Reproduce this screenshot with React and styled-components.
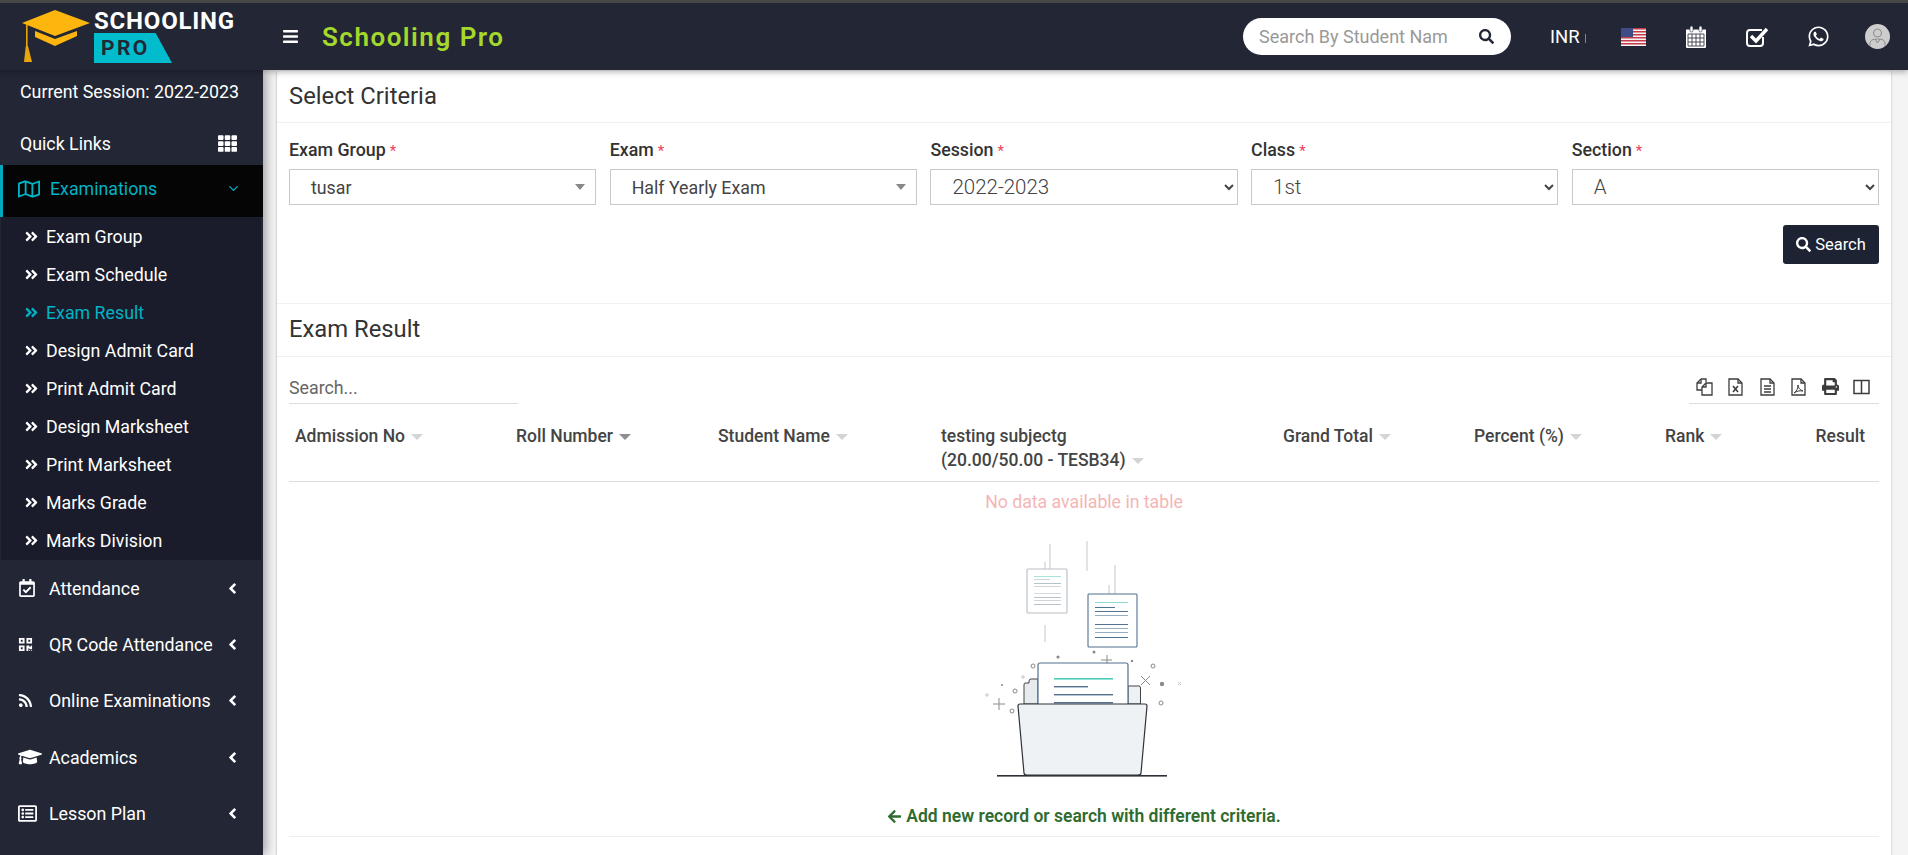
import React from "react";
import styled, { createGlobalStyle } from "styled-components";
import {
  FaBars,
  FaSearch,
  FaTh,
  FaRegMap,
  FaAngleLeft,
  FaAngleDoubleRight,
  FaRegCalendarCheck,
  FaQrcode,
  FaRss,
  FaGraduationCap,
  FaRegListAlt,
  FaWhatsapp,
  FaPrint,
  FaArrowLeft,
} from "react-icons/fa";
import { ChevronDown } from "lucide-react";

const GlobalStyle = createGlobalStyle`
  html, body {
    margin: 0;
    padding: 0;
    height: 100%;
    overflow: hidden;
    background: #f4f4f4;
    font-family: Roboto, "Liberation Sans", sans-serif;
  }
  * { box-sizing: border-box; }
`;

const Page = styled.div`
  height: 855px;
  display: flex;
  flex-direction: column;
  border-top: 3px solid #4a4a4a;
`;

const Header = styled.header`
  height: 67px;
  flex: none;
  display: flex;
  align-items: center;
  background: #232735;
  padding-right: 18px;
  position: relative;
  z-index: 3;
  box-shadow: 0 2px 6px rgba(0, 0, 0, 0.3);
`;

const Logo = styled.div`
  width: 263px;
  flex: none;
  display: flex;
  padding-left: 21px;
  gap: 4px;
`;

const LogoText = styled.div`
  display: flex;
  flex-direction: column;
  gap: 1px;
  padding-top: 1px;
`;

const LogoTop = styled.div`
  font-size: 24px;
  line-height: 21px;
  font-weight: 700;
  color: #fff;
  letter-spacing: 0.8px;
`;

const LogoBadge = styled.div`
  width: 78px;
  height: 30px;
  background: #00bccd;
  clip-path: polygon(0 0, 79% 0, 100% 100%, 0 100%);
  color: #232735;
  font-size: 21px;
  line-height: 30px;
  font-weight: 700;
  letter-spacing: 2.4px;
  padding-left: 7px;
`;

const MenuToggle = styled.span`
  color: #fff;
  font-size: 17px;
  display: flex;
  margin: 0 23px 0 19px;
`;

const Brand = styled.div`
  color: #a5d82d;
  font-size: 26px;
  font-weight: 600;
  letter-spacing: 1.5px;
  flex: 1;
`;

const SearchPill = styled.div`
  width: 268px;
  height: 37px;
  border-radius: 19px;
  background: #fff;
  display: flex;
  align-items: center;
  justify-content: space-between;
  padding: 0 17px 0 16px;
  color: #999;
  font-size: 18px;
  white-space: nowrap;
  svg { color: #232735; font-size: 15px; flex: none; }
`;

const Currency = styled.div`
  color: #fff;
  font-size: 18.500px;
  margin-left: 39px;
  width: 71px;
  &::after {
    content: "";
    display: inline-block;
    width: 1px;
    height: 9px;
    margin-left: 5px;
    background: #5b8fc4;
  }
`;

const TopIcons = styled.div`
  display: grid;
  grid-template-columns: 64px 61px 61px 58px 25px;
  align-items: center;
  color: #fff;
  svg { display: block; }
`;

const Body = styled.div`
  flex: 1;
  display: flex;
  min-height: 0;
`;

const Sidebar = styled.aside`
  width: 263px;
  flex: none;
  background: #232735;
  color: #fff;
  position: relative;
  z-index: 2;
  box-shadow: 3px 0 10px rgba(0, 0, 0, 0.35);
  font-size: 17.8px;
`;

const SessionRow = styled.div`
  height: 42px;
  display: flex;
  align-items: center;
  padding-left: 20px;
  margin-bottom: 10px;
`;

const QuickRow = styled.div`
  height: 43px;
  display: flex;
  align-items: center;
  justify-content: space-between;
  padding: 0 26px 0 20px;
  svg { font-size: 19px; }
`;

const ActiveItem = styled.div`
  height: 52px;
  background: #050505;
  border-left: 3px solid #00a9bd;
  color: #00b3c6;
  display: flex;
  align-items: center;
  padding: 0 22px 5px 15px;
  svg:first-child { font-size: 22px; margin-right: 10px; }
  span { flex: 1; }
`;

const SubMenu = styled.div`
  background: #1a1c2b;
  margin-right: 2px;
  margin-left: 1px;
  height: 343px;
`;

const SubItem = styled.div`
  height: 38.1px;
  display: flex;
  align-items: center;
  padding-left: 23px;
  gap: 7px;
  color: ${({ $active }) => ($active ? "#00b3c6" : "#fff")};
  svg { font-size: 15px; }
`;

const NavItem = styled.div`
  height: 56.4px;
  display: flex;
  align-items: center;
  padding: 0 22px 0 18px;
  span { flex: 1; white-space: nowrap; }
  > svg { font-size: 17px; flex: none; }
`;

const NavIcon = styled.div`
  width: 31px;
  flex: none;
  display: flex;
  font-size: ${({ $size }) => $size || 18}px;
`;

const Main = styled.main`
  flex: 1;
  min-width: 0;
  padding: 1px 16px 0 13px;
`;

const Card = styled.section`
  height: 100%;
  background: #fff;
  border-left: 1px solid #d8d8d8;
  border-right: 1px solid #e2e2e2;
  border-radius: 3px 3px 0 0;
  box-shadow: 0 1px 2px rgba(0, 0, 0, 0.1);
`;

const SectionHead = styled.div`
  height: ${({ $h }) => $h}px;
  display: flex;
  align-items: center;
  padding: 0 12px 2px;
  border-bottom: 1px solid #f1f1f1;
  color: #333;
  font-size: 23.800px;
  font-weight: 400;
`;

const Form = styled.div`
  height: 181px;
  padding: 16px 12px 0;
  border-bottom: 1px solid #f1f1f1;
`;

const FormGrid = styled.div`
  display: grid;
  grid-template-columns: repeat(5, 1fr);
  column-gap: 13.500px;
`;

const Field = styled.div`
  display: flex;
  flex-direction: column;
  gap: 7px;
`;

const Label = styled.label`
  color: #333;
  font-size: 17.800px;
  font-weight: 500;
  line-height: 22px;
  em {
    font-style: normal;
    font-weight: 400;
    font-size: 15px;
    color: #f0405a;
    margin-left: 4px;
  }
`;

const Select2 = styled.div`
  height: 36px;
  border: 1px solid #c9c9c9;
  padding-left: 21px;
  display: flex;
  align-items: center;
  justify-content: space-between;
  padding-right: 10px;
  color: #444;
  font-size: 17.800px;
  &::after {
    content: "";
    border-left: 5px solid transparent;
    border-right: 5px solid transparent;
    border-top: 6px solid #888;
  }
`;

const NativeSelect = styled.select`
  height: 36px;
  width: 100%;
  border: 1px solid #c9c9c9;
  border-radius: 0;
  background: #fff;
  padding-left: 17px;
  color: #444;
  font-family: inherit;
  font-size: 20.500px;
  font-weight: 300;
`;

const FormActions = styled.div`
  display: flex;
  justify-content: flex-end;
  margin-top: 20px;
`;

const Button = styled.button`
  width: 96px;
  height: 39px;
  background: #1d2333;
  color: #fff;
  border: 0;
  border-radius: 3px;
  font-family: inherit;
  font-size: 16.500px;
  display: flex;
  align-items: center;
  justify-content: center;
  gap: 4px;
  svg { font-size: 15px; }
`;

const Toolbar = styled.div`
  display: flex;
  justify-content: space-between;
  align-items: flex-end;
  padding: 0 12px;
  height: 47px;
`;

const TableSearch = styled.div`
  width: 229px;
  height: 34px;
  padding-top: 4px;
  border-bottom: 1px solid #ddd;
  color: #666;
  font-size: 17.800px;
  line-height: 28px;
`;

const Tools = styled.div`
  width: 190px;
  height: 33px;
  border-bottom: 1px solid #ddd;
  display: flex;
  align-items: center;
  justify-content: flex-end;
  gap: 14.400px;
  padding: 0 9px 1px 0;
  color: #3c3c3c;
  font-size: 17px;
  svg { display: block; }
`;

const TableHead = styled.div`
  margin: 17px 12px 0;
  height: 61px;
  padding-top: 3px;
  display: grid;
  grid-template-columns: 221px 202px 223px 342px 191px 191px 150px 1fr;
  border-bottom: 1px solid #ddd;
`;

const HeadCell = styled.div`
  color: #444;
  font-size: 17.500px;
  font-weight: 500;
  line-height: 24px;
  padding: 0 ${({ $right }) => ($right ? 14 : 7)}px 0 6px;
  white-space: nowrap;
  text-align: ${({ $right }) => ($right ? "right" : "left")};
  &[data-sort]::after {
    content: "";
    display: inline-block;
    margin-left: 6px;
    vertical-align: 2px;
    border-left: 6px solid transparent;
    border-right: 6px solid transparent;
    border-top: 6px solid ${({ $sorted }) => ($sorted ? "#8f8f8f" : "#d4d4d4")};
  }
`;

const Empty = styled.div`
  display: flex;
  flex-direction: column;
  align-items: center;
`;

const EmptyText = styled.div`
  color: #f5b5b5;
  font-size: 17.700px;
  line-height: 24px;
  margin-top: 8px;
`;

const EmptyArt = styled.svg`
  display: block;
  margin-top: 16px;
`;

const AddHint = styled.div`
  color: #2e6b2e;
  font-size: 17.500px;
  font-weight: 600;
  line-height: 24px;
  margin-top: 20px;
  display: flex;
  align-items: center;
  gap: 4px;
  svg { font-size: 15px; }
`;

const Rule = styled.div`
  margin: 8px 12px 0;
  border-bottom: 1px solid #eee;
`;

const CapLogo = () => (
  <svg width="69" height="52" viewBox="0 0 69 52">
    <path d="M1 13 34 0 69 13 34 26Z" fill="#fdb60d" />
    <path d="M14 21 34 29 56 21V26L34 36 14 27Z" fill="#fdb60d" />
    <path d="M5 14h1.600v24H5z" fill="#e9a50c" />
    <path d="M4.800 36h2.200L11 52H3Z" fill="#e9a50c" />
  </svg>
);

const Flag = () => (
  <svg width="25" height="18" viewBox="0 0 25 18">
    <rect width="25" height="18" fill="#f4f4f4" />
    {[0, 3, 6, 9, 12, 15].map((y) => (
      <rect key={y} y={y} width="25" height="1.500" fill="#c8394a" />
    ))}
    <rect width="12" height="9" fill="#3f4c86" />
  </svg>
);

const CalendarIcon = () => (
  <svg width="22" height="24" viewBox="0 0 22 24">
    <path d="M1 4.500h20V22q0 1-1 1H2q-1 0-1-1Z" fill="#fff" />
    <rect x="5" y="1" width="3" height="6" rx="1.500" fill="#fff" stroke="#232735" strokeWidth="0.600" />
    <rect x="14" y="1" width="3" height="6" rx="1.500" fill="#fff" stroke="#232735" strokeWidth="0.600" />
    <path
      d="M3 9h16v12H3ZM3 13h16M3 17h16M7 9v12M11 9v12M15 9v12"
      fill="none"
      stroke="#232735"
      strokeWidth="0.800"
    />
  </svg>
);

const CheckIcon = () => (
  <svg width="23" height="22" viewBox="0 0 23 22">
    <path d="M17 11v6q0 3-3 3H4q-3 0-3-3V7q0-3 3-3h12" fill="none" stroke="#fff" strokeWidth="2" />
    <path d="M5 10l5 5L21 3" fill="none" stroke="#fff" strokeWidth="3.400" />
  </svg>
);

const Avatar = () => (
  <svg width="25" height="25" viewBox="0 0 25 25">
    <circle cx="12.500" cy="12.500" r="12.500" fill="#cdcdcd" />
    <circle cx="12.500" cy="9" r="4" fill="#cdcdcd" stroke="#8a8a8a" />
    <path d="M5 22v-3q0-4 7.500-4T20 19v3M10 15l2.500 4 2.500-4" fill="none" stroke="#8a8a8a" />
  </svg>
);

const DocIcon = ({ children }) => (
  <svg width="17" height="18" viewBox="0 0 17 18" fill="none" stroke="currentColor" strokeWidth="1.300">
    <path d="M2 1h9l4 4v12H2Z" />
    <path d="M11 1v4h4" />
    {children}
  </svg>
);

const CopyIcon = () => (
  <svg width="17" height="18" viewBox="0 0 17 18" fill="none" stroke="currentColor" strokeWidth="1.300">
    <path d="M5 1h5v3M5 1 1 5v7h5" />
    <path d="M1 5h4V1" />
    <path d="M10 5h6v12H6V9Z" />
    <path d="M10 5v4H6" />
  </svg>
);

const ColumnsIcon = () => (
  <svg width="17" height="18" viewBox="0 0 17 18" fill="none" stroke="currentColor" strokeWidth="1.500">
    <path d="M1 2.500h15v13H1ZM8.500 2.500v13" />
  </svg>
);

const FileSheet = ({ x, y, w, h, stroke, lines }) => (
  <g>
    <rect x={x} y={y} width={w} height={h} rx="1" fill="#fff" stroke={stroke} strokeWidth="1.100" />
    {lines.map(([ly, lw, c]) => (
      <rect key={ly} x={x + 7} y={y + ly} width={lw} height="1" fill={c} />
    ))}
  </g>
);

// folder drawing, coordinates are page pixels relative to the svg corner
const EmptyFolder = () => (
  <EmptyArt width="288" height="254" viewBox="3 0 288 254">
    <g stroke="#c4c7cb" strokeWidth="1">
      <path d="M113 14v27M108 32v9M150 11v30M178 35v29M172 55v9M108 95v17" />
    </g>
    <FileSheet
      x={90}
      y={39}
      w={40}
      h={44}
      stroke="#b9bec4"
      lines={[
        [7, 27, "#a6e3da"],
        [10, 16, "#cfd5da"],
        [14, 27, "#b8c2cb"],
        [17, 27, "#cfd5da"],
        [24, 27, "#d5dae0"],
        [28, 27, "#b8c2cb"],
        [31, 27, "#cfd5da"],
        [35, 27, "#b8c2cb"],
      ]}
    />
    <FileSheet
      x={151}
      y={64}
      w={49}
      h={53}
      stroke="#52708f"
      lines={[
        [8, 33, "#8edcd0"],
        [13, 20, "#52708f"],
        [17, 33, "#52708f"],
        [21, 33, "#9aabbb"],
        [30, 33, "#52708f"],
        [34, 33, "#9aabbb"],
        [38, 33, "#9aabbb"],
        [43, 33, "#52708f"],
      ]}
    />
    <path d="M96 149h-2q-2 0-2 2v2h-4q-1 0-1 2v19h14v-25Z" fill="#e8ebee" stroke="#444" />
    <path d="M191 156h11q1.500 0 1.500 2v16H191Z" fill="#eef1f4" stroke="#444" />
    <rect x="101" y="133" width="90" height="50" rx="2" fill="#fff" stroke="#52708f" strokeWidth="1.200" />
    <rect x="117" y="148" width="59" height="1.600" fill="#4ecdb9" />
    <rect x="117" y="156" width="34" height="1.400" fill="#52708f" />
    <rect x="117" y="164" width="59" height="1.400" fill="#52708f" />
    <rect x="117" y="172" width="59" height="1.400" fill="#52708f" />
    <path
      d="M81 176q0-2 2-2h125q2 0 2 2l-6 67q0 2-3 2H90q-3 0-3-2Z"
      fill="#eff2f5"
      stroke="#2d3138"
      strokeWidth="1.200"
    />
    <rect x="60" y="245" width="170" height="1.600" fill="#2d3138" />
    <g fill="none" stroke="#8a8a8a" strokeWidth="1">
      <circle cx="96" cy="136" r="2" />
      <circle cx="78" cy="161" r="2" />
      <circle cx="75" cy="181" r="2" />
      <circle cx="216" cy="136" r="2" />
      <circle cx="224" cy="173" r="2" />
      <path d="M204 146l9 9M213 146l-9 9M62 168v12M56 174h12M170 125v9M164 130h11" />
    </g>
    <g fill="#8a8a8a">
      <circle cx="121" cy="127" r="1.600" />
      <circle cx="157" cy="122" r="1.500" />
      <circle cx="195" cy="131" r="1.200" />
      <circle cx="225" cy="154" r="2.200" />
      <circle cx="65" cy="155" r="1" />
    </g>
    <g stroke="#c6c6c6" strokeWidth="1">
      <path d="M86 145v4M84 147h4M50 163v4M48 165h4M241 152l3 3M244 152l-3 3" />
    </g>
  </EmptyArt>
);

const subItems = [
  "Exam Group",
  "Exam Schedule",
  "Exam Result",
  "Design Admit Card",
  "Print Admit Card",
  "Design Marksheet",
  "Print Marksheet",
  "Marks Grade",
  "Marks Division",
];

const navItems = [
  { label: "Attendance", icon: <FaRegCalendarCheck />, size: 18 },
  { label: "QR Code Attendance", icon: <FaQrcode />, size: 15 },
  { label: "Online Examinations", icon: <FaRss />, size: 15 },
  { label: "Academics", icon: <FaGraduationCap />, size: 24 },
  { label: "Lesson Plan", icon: <FaRegListAlt />, size: 19 },
];

const App = () => {
  return (
    <Page>
      <GlobalStyle />
      <Header>
        <Logo>
          <CapLogo />
          <LogoText>
            <LogoTop>SCHOOLING</LogoTop>
            <LogoBadge>PRO</LogoBadge>
          </LogoText>
        </Logo>
        <MenuToggle>
          <FaBars />
        </MenuToggle>
        <Brand>Schooling Pro</Brand>
        <SearchPill>
          Search By Student Nam
          <FaSearch />
        </SearchPill>
        <Currency>INR</Currency>
        <TopIcons>
          <Flag />
          <CalendarIcon />
          <CheckIcon />
          <FaWhatsapp size={23} />
          <Avatar />
        </TopIcons>
      </Header>
      <Body>
        <Sidebar>
          <SessionRow>Current Session: 2022-2023</SessionRow>
          <QuickRow>
            Quick Links
            <FaTh />
          </QuickRow>
          <ActiveItem>
            <FaRegMap />
            <span>Examinations</span>
            <ChevronDown size={15} />
          </ActiveItem>
          <SubMenu>
            {subItems.map((label) => (
              <SubItem key={label} $active={label === "Exam Result"}>
                <FaAngleDoubleRight />
                {label}
              </SubItem>
            ))}
          </SubMenu>
          {navItems.map((item) => (
            <NavItem key={item.label}>
              <NavIcon $size={item.size}>{item.icon}</NavIcon>
              <span>{item.label}</span>
              <FaAngleLeft />
            </NavItem>
          ))}
        </Sidebar>
        <Main>
          <Card>
            <SectionHead $h={52}>Select Criteria</SectionHead>
            <Form>
              <FormGrid>
                <Field>
                  <Label>
                    Exam Group<em>*</em>
                  </Label>
                  <Select2>tusar</Select2>
                </Field>
                <Field>
                  <Label>
                    Exam<em>*</em>
                  </Label>
                  <Select2>Half Yearly Exam</Select2>
                </Field>
                <Field>
                  <Label>
                    Session<em>*</em>
                  </Label>
                  <NativeSelect defaultValue="2022-2023">
                    <option>2022-2023</option>
                  </NativeSelect>
                </Field>
                <Field>
                  <Label>
                    Class<em>*</em>
                  </Label>
                  <NativeSelect defaultValue="1st">
                    <option>1st</option>
                  </NativeSelect>
                </Field>
                <Field>
                  <Label>
                    Section<em>*</em>
                  </Label>
                  <NativeSelect defaultValue="A">
                    <option>A</option>
                  </NativeSelect>
                </Field>
              </FormGrid>
              <FormActions>
                <Button>
                  <FaSearch />
                  Search
                </Button>
              </FormActions>
            </Form>
            <SectionHead $h={53}>Exam Result</SectionHead>
            <Toolbar>
              <TableSearch>Search...</TableSearch>
              <Tools>
                <CopyIcon />
                <DocIcon>
                  <path d="M6 8l5 6M11 8l-5 6" strokeWidth="1.600" />
                </DocIcon>
                <DocIcon>
                  <path d="M5 8h7M5 11h7M5 14h7" />
                </DocIcon>
                <DocIcon>
                  <path d="M4 15c3-2 4-5 4-8 0 3 2 5 5 6-4-.500-6 0-9 2Z" strokeWidth="1" />
                </DocIcon>
                <FaPrint size={17} />
                <ColumnsIcon />
              </Tools>
            </Toolbar>
            <TableHead>
              <HeadCell data-sort>Admission No</HeadCell>
              <HeadCell data-sort $sorted>
                Roll Number
              </HeadCell>
              <HeadCell data-sort>Student Name</HeadCell>
              <HeadCell data-sort>
                testing subjectg
                <br />
                (20.00/50.00 - TESB34)
              </HeadCell>
              <HeadCell data-sort>Grand Total</HeadCell>
              <HeadCell data-sort>Percent (%)</HeadCell>
              <HeadCell data-sort>Rank</HeadCell>
              <HeadCell $right>Result</HeadCell>
            </TableHead>
            <Empty>
              <EmptyText>No data available in table</EmptyText>
              <EmptyFolder />
              <AddHint>
                <FaArrowLeft />
                Add new record or search with different criteria.
              </AddHint>
            </Empty>
            <Rule />
          </Card>
        </Main>
      </Body>
    </Page>
  );
};

export default App;
